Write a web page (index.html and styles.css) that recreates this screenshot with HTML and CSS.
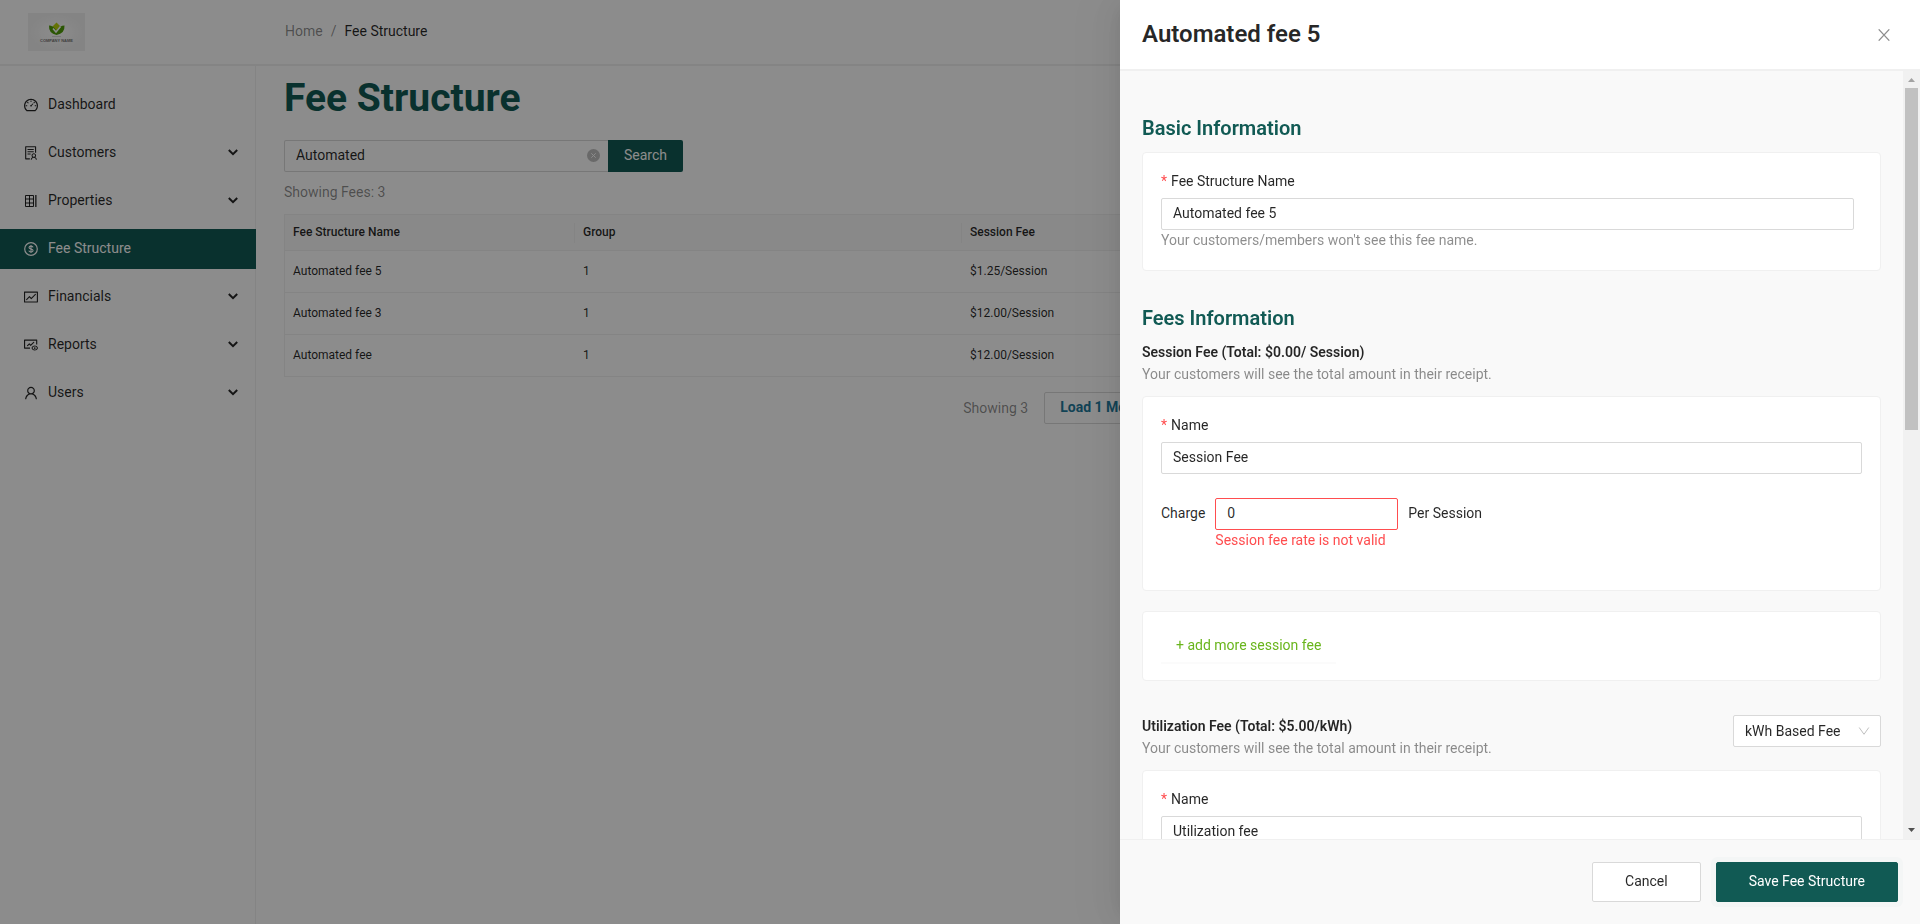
FILE: index.html
```html
<!DOCTYPE html>
<html lang="en">
<head>
<meta charset="utf-8">
<title>Fee Structure</title>
<link rel="stylesheet" href="styles.css">
</head>
<body>
<svg class="sprite" aria-hidden="true">
  <symbol id="chevron" viewBox="0 0 10 10"><path d="M.8 3 5 7.200 9.200 3" fill="none" stroke="currentColor" stroke-width="2"/></symbol>
</svg>
<div class="app">
  <header class="topbar">
    <div class="brand">
      <svg class="logo" viewBox="0 0 57 38" role="img" aria-label="Company name">
        <defs><radialGradient id="paper"><stop offset="0" stop-color="#fff"/><stop offset="1" stop-color="#f0f0f0"/></radialGradient></defs>
        <rect width="57" height="38" fill="url(#paper)"/>
        <path d="M28.500 9.500 33 14l-4.500 5-4.500-5z" fill="#b9d20a"/>
        <path d="M21 12.500q4 0 7.500 5 3.500-5 8-5 .5 8-8 9.500-8-1.500-7.500-9.500z" fill="#4f9d08"/>
        <path d="M25 15.500l3 3.500 4.500-5.500" fill="none" stroke="#fff" stroke-width="1.600"/>
        <path d="M24 23.500h9" stroke="#d8d8d8" stroke-width="1"/>
        <text x="28.500" y="29" text-anchor="middle" class="logo-text">COMPANY NAME</text>
      </svg>
    </div>
    <nav class="crumbs" aria-label="Breadcrumb"><a href="#home">Home</a><span class="slash">/</span><span class="current">Fee Structure</span></nav>
  </header>
  <div class="shell">
    <nav class="side" aria-label="Main">
      <a class="item" href="#dashboard"><svg class="icon" viewBox="64 64 896 896"><path d="M924.8 385.6a446.7 446.7 0 00-96-142.400 446.700 446.700 0 00-142.400-96C631.1 123.8 572.5 112 512 112s-119.100 11.800-174.400 35.200a446.700 446.700 0 00-142.400 96 446.700 446.700 0 00-96 142.400C75.8 440.9 64 499.5 64 560c0 132.700 58.300 257.700 159.900 343.100l1.700 1.400c5.800 4.800 13.100 7.500 20.600 7.500h531.700c7.500 0 14.800-2.700 20.600-7.500l1.700-1.400C901.7 817.700 960 692.700 960 560c0-60.500-11.900-119.100-35.200-174.400zM761.4 836H262.600A371.12 371.12 0 01140 560c0-99.400 38.700-192.800 109-263 70.300-70.300 163.700-109 263-109 99.400 0 192.800 38.700 263 109 70.300 70.300 109 163.700 109 263 0 105.600-44.500 205.500-122.600 276zM623.5 421.500a8.030 8.030 0 00-11.300 0L527.7 506c-18.700-5-39.400-.2-54.100 14.500a55.950 55.950 0 000 79.200 55.950 55.950 0 0079.200 0 55.870 55.870 0 0014.500-54.100l84.500-84.500c3.100-3.100 3.100-8.200 0-11.300l-28.300-28.300zM490 320h44c4.400 0 8-3.600 8-8v-80c0-4.400-3.600-8-8-8h-44c-4.400 0-8 3.600-8 8v80c0 4.400 3.600 8 8 8zm260 218v44c0 4.400 3.600 8 8 8h80c4.400 0 8-3.600 8-8v-44c0-4.400-3.600-8-8-8h-80c-4.400 0-8 3.600-8 8zm12.700-197.200l-31.100-31.100a8.030 8.030 0 00-11.300 0l-56.600 56.600a8.030 8.030 0 000 11.300l31.100 31.100c3.100 3.100 8.200 3.100 11.300 0l56.600-56.600c3.100-3.100 3.100-8.200 0-11.300zm-458.600-31.100a8.030 8.030 0 00-11.300 0l-31.100 31.100a8.030 8.030 0 000 11.300l56.600 56.600c3.100 3.100 8.200 3.100 11.300 0l31.100-31.100c3.100-3.100 3.100-8.200 0-11.300l-56.600-56.600zM262 530h-80c-4.400 0-8 3.600-8 8v44c0 4.400 3.600 8 8 8h80c4.400 0 8-3.600 8-8v-44c0-4.400-3.600-8-8-8z"/></svg><span class="item-label">Dashboard</span></a>
      <a class="item" href="#customers"><svg class="icon" viewBox="64 64 896 896"><path d="M688 264c0-4.400-3.600-8-8-8H296c-4.400 0-8 3.600-8 8v48c0 4.400 3.600 8 8 8h384c4.400 0 8-3.600 8-8v-48zm-8 136H296c-4.400 0-8 3.600-8 8v48c0 4.400 3.600 8 8 8h384c4.400 0 8-3.600 8-8v-48c0-4.400-3.600-8-8-8zM480 544H296c-4.400 0-8 3.600-8 8v48c0 4.400 3.600 8 8 8h184c4.400 0 8-3.600 8-8v-48c0-4.400-3.600-8-8-8zm-48 308H208V148h560v344c0 4.400 3.600 8 8 8h56c4.400 0 8-3.600 8-8V108c0-17.700-14.300-32-32-32H168c-17.700 0-32 14.300-32 32v784c0 17.700 14.300 32 32 32h264c4.400 0 8-3.600 8-8v-56c0-4.400-3.600-8-8-8zm356.800-74.400c29-26.300 47.200-64.300 47.200-106.600 0-79.500-64.500-144-144-144s-144 64.500-144 144c0 42.300 18.200 80.300 47.200 106.600-57 32.500-96.200 92.700-99.200 162.100-.2 4.500 3.500 8.300 8 8.300h48.100c4.200 0 7.700-3.300 8-7.600C564 871.200 621.700 816 692 816s128 55.200 131.900 124.400c.2 4.200 3.700 7.600 8 7.600H880c4.600 0 8.200-3.800 8-8.300-2.900-69.500-42.200-129.600-99.200-162.100zM692 591c44.200 0 80 35.800 80 80s-35.800 80-80 80-80-35.800-80-80 35.800-80 80-80z"/></svg><span class="item-label">Customers</span><svg class="chev"><use href="#chevron"/></svg></a>
      <a class="item" href="#properties"><svg class="icon" viewBox="0 0 14 14"><path d="M1.500 1.500h8v11h-8zM5.500 1.500v11M1.500 5h8M1.500 9h8" fill="none" stroke="currentColor"/><path d="M11.200 1h1.300v12h-1.300z"/></svg><span class="item-label">Properties</span><svg class="chev"><use href="#chevron"/></svg></a>
      <a class="item active" href="#fees" aria-current="page"><svg class="icon" viewBox="0 0 14 14"><g fill="none" stroke="currentColor"><circle cx="7" cy="7" r="6.300" stroke-width="1.200"/><path d="M9.100 5.300C8.900 4.500 8.100 4.100 7 4.100c-1.200 0-2 .5-2 1.400C5 6.500 5.900 6.700 7 7c1.200.2 2.100.5 2.100 1.500 0 .9-.9 1.500-2.100 1.500-1.200 0-2-.5-2.200-1.400M7 3v8" stroke-width="1.100"/></g></svg><span class="item-label">Fee Structure</span></a>
      <a class="item" href="#financials"><svg class="icon" viewBox="64 64 896 896"><path d="M926 164H94c-17.700 0-32 14.300-32 32v640c0 17.700 14.300 32 32 32h832c17.700 0 32-14.300 32-32V196c0-17.700-14.300-32-32-32zm-40 632H134V236h752v560zm-658.900-82.300c3.100 3.100 8.200 3.100 11.300 0l172.500-172.500 114.400 114.500c3.100 3.100 8.200 3.100 11.300 0l297-297.200c3.100-3.100 3.100-8.200 0-11.300l-36.800-36.800a8.030 8.030 0 00-11.300 0L531 565 416.600 450.500a8.030 8.030 0 00-11.300 0l-214.900 215a8.030 8.030 0 000 11.300l36.700 36.900z"/></svg><span class="item-label">Financials</span><svg class="chev"><use href="#chevron"/></svg></a>
      <a class="item" href="#reports"><svg class="icon" viewBox="64 64 896 896"><path d="M956 686.500l-.1-.1-.1-.1C911.700 593 843.400 545 752.500 545s-159.200 48.100-203.400 141.300v.1a42.920 42.920 0 000 36.400C593.300 816 661.600 864 752.500 864s159.200-48.100 203.400-141.300c5.400-11.500 5.400-24.800.1-36.200zM752.500 800c-62.100 0-107.400-30-141.100-95.500C645 639 690.400 609 752.500 609c62.100 0 107.400 30 141.100 95.500C860 770 814.600 800 752.500 800z"/><path d="M697 705a56 56 0 10112 0 56 56 0 10-112 0zM136 232h704v253h72V192c0-17.700-14.300-32-32-32H96c-17.700 0-32 14.300-32 32v520c0 17.700 14.300 32 32 32h352v-72H136V232z"/><path d="M724.900 338.100l-36.800-36.800a8.030 8.030 0 00-11.300 0L493 485.300l-86.100-86.200a8.030 8.030 0 00-11.300 0L251.300 543.400a8.030 8.030 0 000 11.300l36.800 36.800c3.100 3.100 8.200 3.100 11.300 0l101.800-101.800 86.100 86.200c3.100 3.100 8.200 3.100 11.300 0l226.300-226.500c3.200-3.100 3.200-8.200 0-11.300z"/></svg><span class="item-label">Reports</span><svg class="chev"><use href="#chevron"/></svg></a>
      <a class="item" href="#users"><svg class="icon" viewBox="64 64 896 896"><path d="M858.500 763.600a374 374 0 00-80.600-119.500 375.630 375.630 0 00-119.500-80.600c-.4-.2-.8-.3-1.200-.5C719.500 518 760 444.700 760 362c0-137-111-248-248-248S264 225 264 362c0 82.700 40.500 156 102.800 201.100-.4.2-.8.3-1.200.5-44.800 18.900-85 46-119.500 80.600a375.630 375.630 0 00-80.600 119.500A371.700 371.700 0 00136 901.800a8 8 0 008 8.200h60c4.400 0 7.900-3.500 8-7.800 2-77.200 33-149.500 87.800-204.300 56.700-56.700 132-87.900 212.200-87.900s155.500 31.200 212.200 87.900C779 752.700 810 825 812 902.200c.1 4.400 3.600 7.800 8 7.800h60a8 8 0 008-8.200c-1-47.800-10.900-94.300-29.500-138.200zM512 534c-45.900 0-89.100-17.900-121.600-50.400S340 407.900 340 362c0-45.900 17.900-89.100 50.400-121.600S466.100 190 512 190s89.100 17.900 121.600 50.400S684 316.100 684 362c0 45.900-17.900 89.100-50.400 121.600S557.900 534 512 534z"/></svg><span class="item-label">Users</span><svg class="chev"><use href="#chevron"/></svg></a>
    </nav>
    <main class="main">
      <h1 class="title">Fee Structure</h1>
      <form class="search">
        <div class="search-box">
          <input class="search-input" type="text" value="Automated" aria-label="Search fees">
          <button class="clear" type="button" aria-label="Clear"><svg viewBox="0 0 13 13"><circle cx="6.500" cy="6.500" r="6.500" fill="currentColor"/><path d="M4.300 4.300l4.400 4.400M8.700 4.300 4.300 8.700" stroke="#fff" stroke-width="1"/></svg></button>
        </div>
        <button class="btn-search" type="button">Search</button>
      </form>
      <p class="count">Showing Fees: 3</p>
      <table class="fees">
        <colgroup><col class="col-name"><col class="col-group"><col></colgroup>
        <thead><tr><th>Fee Structure Name</th><th>Group</th><th>Session Fee</th></tr></thead>
        <tbody>
          <tr><td>Automated fee 5</td><td>1</td><td>$1.25/Session</td></tr>
          <tr><td>Automated fee 3</td><td>1</td><td>$12.00/Session</td></tr>
          <tr><td>Automated fee</td><td>1</td><td>$12.00/Session</td></tr>
        </tbody>
      </table>
      <div class="pager"><span>Showing 3</span><button class="btn-load" type="button">Load 1 More</button></div>
    </main>
  </div>
</div>
<div class="mask"></div>
<section class="drawer" role="dialog" aria-labelledby="drawer-title">
  <header class="drawer-head">
    <h2 class="drawer-title" id="drawer-title">Automated fee 5</h2>
    <button class="close" type="button" aria-label="Close"><svg viewBox="0 0 12 12"><path d="M.7.3l10.600 11.400M11.300.3.7 11.700" stroke="currentColor" stroke-width="1.200"/></svg></button>
  </header>
  <div class="drawer-body">
    <div class="content">
      <h3 class="section">Basic Information</h3>
      <div class="card">
        <div class="inset">
          <label class="label" for="fee-name"><span class="req">*</span>Fee Structure Name</label>
          <input class="input" id="fee-name" type="text" value="Automated fee 5">
          <p class="help">Your customers/members won't see this fee name.</p>
        </div>
      </div>
      <h3 class="section section-next">Fees Information</h3>
      <div class="group-head">
        <div>
          <h4 class="sub">Session Fee (Total: $0.00/ Session)</h4>
          <p class="note">Your customers will see the total amount in their receipt.</p>
        </div>
      </div>
      <div class="card">
        <label class="label" for="session-name"><span class="req">*</span>Name</label>
        <input class="input" id="session-name" type="text" value="Session Fee">
        <div class="charge">
          <label class="charge-label" for="rate">Charge</label>
          <div class="rate">
            <input class="input invalid" id="rate" type="text" value="0" aria-invalid="true">
            <p class="help error">Session fee rate is not valid</p>
          </div>
          <span class="charge-label">Per Session</span>
        </div>
      </div>
      <div class="card card-next"><button class="btn-add" type="button">+ add more session fee</button></div>
      <div class="group-head group-next">
        <div>
          <h4 class="sub">Utilization Fee (Total: $5.00/kWh)</h4>
          <p class="note">Your customers will see the total amount in their receipt.</p>
        </div>
        <div class="select-wrap">
          <select class="select" aria-label="Utilization fee type"><option>kWh Based Fee</option></select>
          <svg class="select-arrow" viewBox="0 0 12 12"><path d="M1.200 2.500 6 9.300l4.800-6.800" fill="none" stroke="currentColor"/></svg>
        </div>
      </div>
      <div class="card">
        <label class="label" for="util-name"><span class="req">*</span>Name</label>
        <input class="input" id="util-name" type="text" value="Utilization fee">
      </div>
    </div>
    <div class="scrollbar" aria-hidden="true">
      <svg class="arrow up" viewBox="0 0 17 17"><path d="M5 11h7L8.500 7z"/></svg>
      <div class="track"><div class="thumb"></div></div>
      <svg class="arrow" viewBox="0 0 17 17"><path d="M5 6h7l-3.500 4z"/></svg>
    </div>
  </div>
  <footer class="drawer-foot">
    <button class="btn-cancel" type="button">Cancel</button>
    <button class="btn-save" type="button">Save Fee Structure</button>
  </footer>
</section>
</body>
</html>
```
FILE: styles.css
```css
:root {
  --brand: #115a54;
  --line: #f0f0f0;
  --field: #d9d9d9;
  --text: rgba(0, 0, 0, 0.85);
  --muted: rgba(0, 0, 0, 0.45);
  --error: #ff4d4f;
}

* { box-sizing: border-box; }

body, h1, h2, h3, h4, p { margin: 0; }

body {
  height: 100vh;
  overflow: hidden;
  background: #fff;
  color: var(--text);
  font: 14px/22px Roboto, sans-serif;
}

input, button, select { font: inherit; color: inherit; }
button { cursor: pointer; border: 0; padding: 0; background: none; }
a { color: inherit; text-decoration: none; }
svg { display: block; }
.sprite { display: none; }

.app { display: flex; flex-direction: column; height: 100vh; }

/* Top bar */
.topbar { display: flex; align-items: flex-start; height: 66px; border-bottom: 2px solid var(--line); }
.brand { width: 285px; padding: 13px 28px 0; }
.logo { width: 57px; height: 38px; }
.logo-text { font: 700 4px "Liberation Sans", sans-serif; fill: #777; }
.crumbs { display: flex; gap: 8px; padding-top: 20px; color: var(--muted); }
.crumbs .current { color: var(--text); }

/* Sidebar */
.shell { display: flex; flex: 1; min-height: 0; }
.side { width: 256px; padding-top: 19px; border-right: 1px solid var(--line); }
.item {
  display: flex;
  align-items: center;
  height: 40px;
  margin: 0 -1px 8px 0;
  padding: 0 18px 2px 24px;
}
.item.active { background: var(--brand); color: #fff; }
.icon { width: 14px; height: 14px; margin: 2px 10px 0 0; fill: currentColor; }
.item-label { flex: 1; line-height: 38px; }
.chev { width: 10px; height: 10px; }

/* Fee list */
.main { flex: 1; min-width: 0; padding: 0 28px; }
.title { padding-top: 8px; color: var(--brand); font-size: 39px; line-height: 48px; font-weight: 700; }
.search { display: flex; margin-top: 18px; }
.search-box { position: relative; width: 324px; }
.search-input {
  width: 100%;
  height: 32px;
  padding: 0 30px 2px 11px;
  border: 1px solid var(--field);
  border-right: 0;
  border-radius: 2px 0 0 2px;
  background: #fff;
}
.clear { position: absolute; top: 9px; right: 8px; color: rgba(0, 0, 0, 0.25); }
.clear svg { width: 13px; height: 13px; }
.btn-search { height: 32px; padding: 0 16px 2px; border-radius: 0 2px 2px 0; background: var(--brand); color: #fff; }
.count { margin: 9px 0 11px; color: var(--muted); }
.fees {
  width: 100%;
  table-layout: fixed;
  border: 1px solid var(--line);
  border-bottom: 0;
  border-spacing: 0;
  font-size: 12px;
  line-height: 20px;
}
.col-name { width: 290px; }
.col-group { width: 387px; }
.fees th { position: relative; height: 36px; padding: 0 8px 2px; border-bottom: 1px solid var(--line); background: #fafafa; font-weight: 500; text-align: left; }
.fees th:not(:last-child)::after { content: ""; position: absolute; top: 8px; right: 0; width: 1px; height: 20px; background: var(--line); }
.fees td { height: 42px; padding: 0 8px 2px; border-bottom: 1px solid var(--line); }
.pager { display: flex; justify-content: center; align-items: center; gap: 16px; margin: 15px 58px 0 0; color: var(--muted); }
.btn-load { height: 32px; padding: 0 15px 2px; border: 1px solid var(--field); border-radius: 2px; color: #1f7a9c; font-weight: 700; }

/* Drawer */
.mask { position: fixed; inset: 0; background: rgba(0, 0, 0, 0.45); }
.drawer {
  position: fixed;
  top: 0;
  right: 0;
  bottom: 0;
  display: flex;
  flex-direction: column;
  width: 800px;
  background: #f9f9f9;
  box-shadow: -6px 0 16px -8px rgba(0, 0, 0, 0.08), -9px 0 28px 0 rgba(0, 0, 0, 0.05), -12px 0 48px 16px rgba(0, 0, 0, 0.03);
}
.drawer-head { display: flex; justify-content: space-between; align-items: center; height: 71px; padding: 0 30px 0 22px; border-bottom: 2px solid var(--line); background: #fff; }
.drawer-title { padding-bottom: 2px; font-size: 24px; line-height: 32px; font-weight: 600; }
.close { color: var(--muted); }
.close svg { width: 12px; height: 12px; }
.drawer-body { display: flex; flex: 1; min-height: 0; }
.content { flex: 1; overflow: hidden; padding: 43px 22px 0; }
.section { margin-bottom: 10px; color: var(--brand); font-size: 20px; line-height: 28px; font-weight: 600; }
.section-next { margin: 33px 0 9px; }
.group-head { display: flex; justify-content: space-between; align-items: flex-start; margin-bottom: 11px; }
.group-next { margin-top: 34px; }
.sub { font-size: 14px; line-height: 22px; font-weight: 600; }
.note { color: var(--muted); }
.help { padding-bottom: 2px; line-height: 20px; color: var(--muted); }
.card { padding: 18px; border: 1px solid var(--line); border-radius: 4px; background: #fff; }
.card-next { margin-top: 20px; }
.inset { padding-right: 8px; }
.label { display: block; margin-bottom: 7px; line-height: 20px; }
.req { margin-right: 4px; color: var(--error); }
.input { display: block; width: 100%; height: 32px; padding: 0 11px 2px; border: 1px solid var(--field); border-radius: 2px; background: #fff; }
.input.invalid { border-color: var(--error); }
.charge { display: flex; gap: 10px; padding: 24px 0 20px; }
.charge-label { line-height: 30px; }
.rate { width: 183px; }
.error { color: var(--error); }
.btn-add { display: block; height: 32px; padding: 0 15px 2px; color: #69b51c; box-shadow: 0 2px 0 rgba(0, 0, 0, 0.016); }
.select-wrap { position: relative; width: 148px; }
.select { display: block; width: 100%; height: 32px; padding: 0 11px; border: 1px solid var(--field); border-radius: 2px; background: #fff; appearance: none; }
.select-arrow { position: absolute; top: 10px; right: 11px; width: 12px; height: 12px; color: #bfbfbf; pointer-events: none; }

.scrollbar { display: flex; flex-direction: column; width: 17px; background: #f1f1f1; }
.arrow { width: 17px; height: 17px; fill: #505050; }
.arrow.up { fill: #a3a3a3; }
.track { flex: 1; padding: 0 2px; }
.thumb { height: 342px; background: #c1c1c1; }

.drawer-foot { display: flex; justify-content: flex-end; gap: 15px; padding: 22px; border-top: 1px solid var(--line); }
.btn-cancel, .btn-save { height: 40px; padding: 0 32px 2px; border: 1px solid var(--field); border-radius: 2px; background: #fff; }
.btn-save { border-color: var(--brand); background: var(--brand); color: #fff; box-shadow: 0 0 0 5px rgba(17, 90, 84, 0.02); }
```
